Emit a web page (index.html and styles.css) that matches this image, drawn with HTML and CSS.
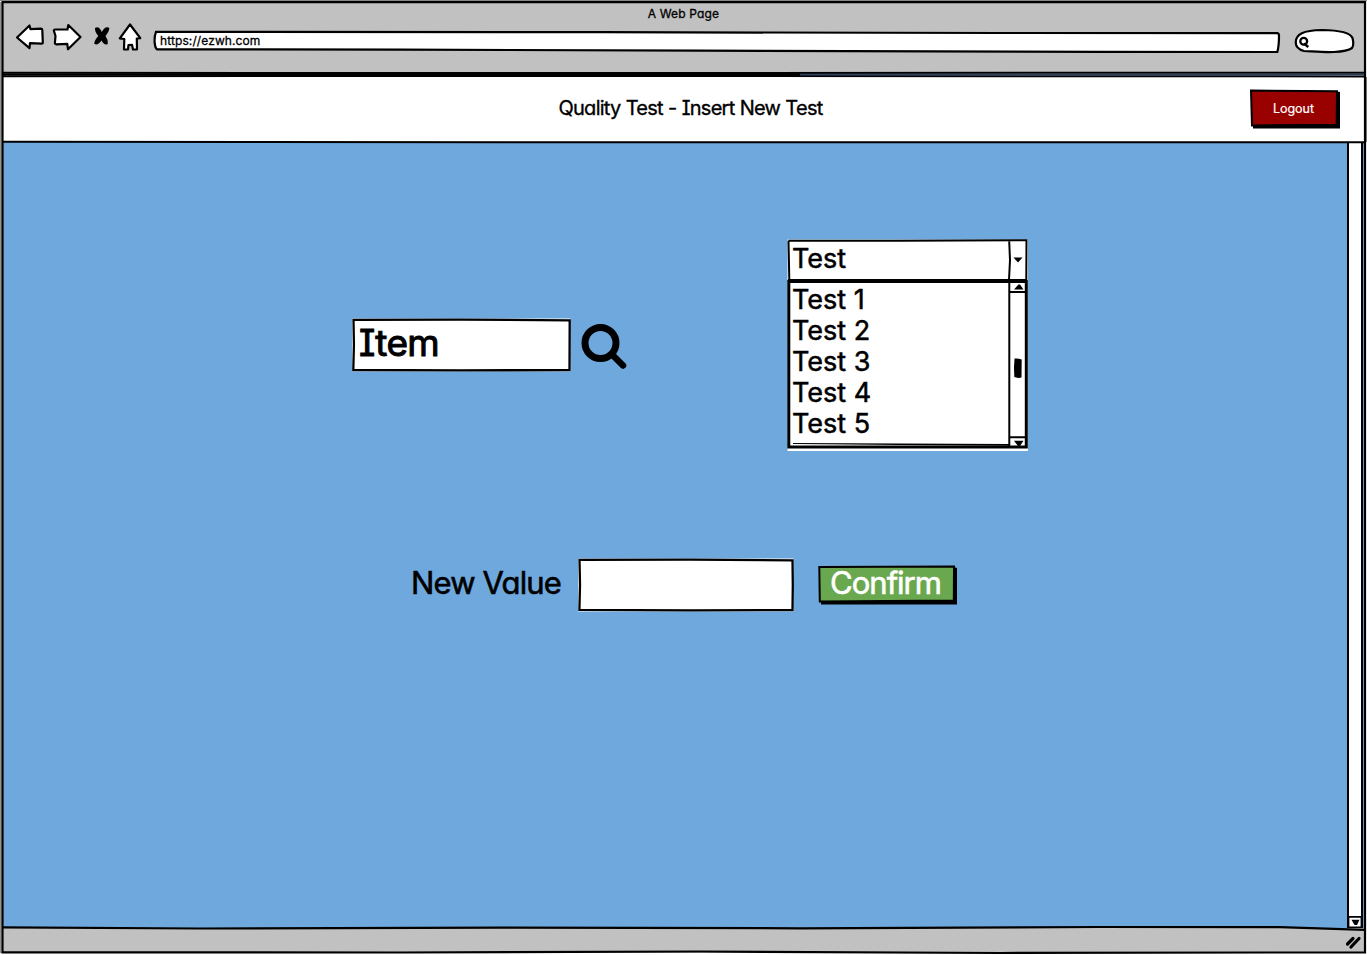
FILE: index.html
```html
<!DOCTYPE html>
<html lang="en">
<head>
<meta charset="utf-8">
<title>A Web Page</title>
<link rel="stylesheet" href="styles.css">
</head>
<body>
<div class="window">
  <header class="chrome">
    <div class="chrome-title"><span>A Web Page</span></div>
    <div class="toolbar">
      <svg class="nav-icons" width="128" height="32" viewBox="14 21 128 32">
        <g fill="#fff" stroke="#000" stroke-width="2.200" stroke-linejoin="round">
          <path d="M17 37.500L29.500 25.500L30.500 29.200L41 28.600Q42.300 28.700 42.300 30L42.800 42.500Q42.800 43.700 41.500 43.600L30 43.200L29.500 48.200Z"/>
          <path d="M53.800 30.500Q54 29.500 55 29.500L67.500 29.500L68.300 25L80.500 37L68 49.300L67.300 43.800L56 44.300Q54.800 44 54.900 43L55.500 36Z"/>
          <path d="M130 24.500L140.300 38.200L136.800 38.500L137 49.300L133 49.500L132 44.800L128.500 45L128 49.300L124 49.500L124.300 39L119.800 38.300Z"/>
        </g>
        <path d="M95 28Q99 25.500 101.800 32Q105 25.500 109.300 27.800Q109.500 31 105.500 36Q108.500 40 107.800 44Q104.500 46 101.500 40.500Q97 46.500 94.200 43.500Q94.500 40 98.300 36Q94.500 31.500 95 28Z" fill="#000"/>
      </svg>
      <div class="address">
        <svg class="frame" width="1128" height="24" viewBox="153 30 1128 24"><path d="M156 31.800L600 32.200L1000 33L1277.500 33.200Q1279 33.500 1279 36Q1279 46 1277.300 52L1100 51.800L700 50.700L400 49.600L157 49.300Q155.500 48.500 154.800 44Q154 37 156 31.800Z" fill="#fff" stroke="#000" stroke-width="2.200"/></svg>
        <span>https://ezwh.com</span>
      </div>
      <svg class="search-pill" width="62" height="28" viewBox="1293 27 62 28">
        <path d="M1295.800 42C1296 34 1303 30.500 1322 30C1337 30.200 1350 32 1352.500 38C1353.500 42 1353.500 46 1352 48C1348 51 1343 51.500 1334 52C1324 52.500 1312 51.300 1304 51C1297 49 1295.500 46 1295.800 42Z" fill="#fff" stroke="#000" stroke-width="2.200"/>
        <circle cx="1303.700" cy="41.300" r="3.400" fill="none" stroke="#000" stroke-width="2.300"/><path d="M1304 43.500L1308.300 47" stroke="#000" stroke-width="2.400"/>
      </svg>
    </div>
  </header>

  <section class="banner">
    <h1 class="page-title">Quality Test - Insert New Test</h1>
    <button class="btn logout">
      <svg class="frame" width="92" height="40" viewBox="1249 89 92 40"><path d="M1253 124L1337 124L1337 91.500L1340 92L1340 128.500L1253 128.500Z"/><path d="M1251 90.500L1337 91.300L1336.700 124.700L1252 125.500Z" fill="#900" stroke="#000" stroke-width="2"/></svg>
      <span>Logout</span>
    </button>
  </section>

  <main class="body">
    <div class="content">
      <div class="pick-row">
        <div class="item-search">
          <div class="field item">
            <svg class="frame" width="220" height="54" viewBox="351 318 220 54"><path d="M352 318.500H570.500V371.500H352Z" fill="#fff"/><path d="M353.500 319.900L460 319.600L569.700 320.300L569.500 370.200L460 370.300L353.300 370L353.900 345Z" fill="#fff" stroke="#000" stroke-width="2.300"/></svg>
            <span>Item</span>
          </div>
          <svg class="magnifier" width="48" height="48" viewBox="580 322 48 48"><circle cx="600.500" cy="343" r="15.500" fill="none" stroke="#000" stroke-width="7"/><path d="M612 354.500L623 365.500" stroke="#000" stroke-width="6.500" stroke-linecap="round"/></svg>
        </div>

        <div class="dropdown">
          <svg class="frame" width="242" height="212" viewBox="787 239 242 212">
            <path d="M787.500 239.500H1028V451H787.500Z" fill="#fff"/>
            <path d="M788.500 240.800L900 240.700L1026.500 240.300L1026.300 280M788.500 240.800L789.300 280M1009.200 241L1010 260L1009 280" fill="none" stroke="#000" stroke-width="2"/>
            <path d="M788.800 281.500H1026.300V447H788.800Z" fill="none" stroke="#000" stroke-width="3"/>
            <path d="M788 281H1027" stroke="#000" stroke-width="4"/>
            <path d="M1009.300 282V446M1010 292H1026M1010 437.300H1026" fill="none" stroke="#000" stroke-width="2"/>
            <path d="M793 443L1009 444V445.800L900 445L793 444Z"/>
            <path d="M1013.500 257.500H1022.500L1018 262.500ZM1014 289.500L1018.500 284.500H1020L1023.500 289.500ZM1014 440.800H1023.500L1020 446H1018Z"/>
            <path d="M1014.500 358.500Q1018 358 1021.700 359.500L1021.500 377.500Q1018 378.500 1014.300 377L1014 367Z"/>
          </svg>
          <div class="selected"><span>Test</span></div>
          <ul class="options">
            <li><span>Test 1</span></li><li><span>Test 2</span></li><li><span>Test 3</span></li><li><span>Test 4</span></li><li><span>Test 5</span></li>
          </ul>
        </div>
      </div>

      <div class="value-row">
        <label class="value-label">New Value</label>
        <div class="field value">
          <svg class="frame" width="216" height="54" viewBox="578 558 216 54"><path d="M578 558.500H793.500V611.500H578Z" fill="#fff"/><path d="M579.500 559.900L690 559.600L792.500 560.300L792.800 585L792.500 610L690 610.300L579.400 609.900L580 585Z" fill="#fff" stroke="#000" stroke-width="2.300"/></svg>
        </div>
        <button class="btn confirm">
          <svg class="frame" width="140" height="40" viewBox="818 565 140 40"><path d="M821 600H954V567L957 568V604.500H821Z"/><path d="M819.300 567L954 566.500L953.800 600.500L819.800 601.500Z" fill="#6aa84f" stroke="#000" stroke-width="2"/></svg>
          <span>Confirm</span>
        </button>
      </div>
    </div>
    <div class="scrollbar">
      <svg width="19" height="787" viewBox="1347 143 19 787"><path d="M1348 143H1362V928H1348Z" fill="#fff"/><path d="M1348 143V928M1362 143V928" stroke="#000" stroke-width="2"/><path d="M1348.500 916.800H1361.500V927.300H1348.500Z" fill="#fff" stroke="#000" stroke-width="1.800"/><path d="M1351.500 919.800H1359.500L1357 925H1354.500Z"/></svg>
    </div>
  </main>

  <footer class="statusbar">
    <svg class="grip" width="20" height="16" viewBox="1344 934 20 16"><path d="M1347.500 944L1353 938.500M1351 947L1359 938.500" stroke="#000" stroke-width="3.200" stroke-linecap="round"/></svg>
  </footer>

  <svg class="outline" width="1367" height="955" viewBox="0 0 1367 955" fill="none" stroke="#000">
    <path d="M0 .5H1367" stroke="#858985" stroke-width="1"/>
    <path d="M.8 2V953" stroke="#8d918d" stroke-width="1.500"/>
    <path d="M2.500 2.200H1365V952.300L1000 953L700 951.500L400 952.500L2.500 952.300Z" stroke-width="2.200"/>
    <path d="M2 72.800L300 73L1365 72.800M2 76.200L500 76L1365 76.400" stroke-width="2"/>
    <path d="M3 74.500H800" stroke-width="2"/><path d="M800 74.600H1364" stroke="#29425b" stroke-width="1.600"/>
    <path d="M2 141.700L700 142.300L1365 142.200M1365.500 77V142" stroke-width="2"/>
    <path d="M2 927.300L200 928.500L500 927.600L800 928.300L1100 927L1280 927.200L1365 929.800" stroke-width="2.200"/>
  </svg>
</div>
</body>
</html>
```
FILE: styles.css
```css
* { box-sizing: border-box; }
body {
  margin: 0;
  background: #fff;
  color: #000;
  font-family: Inter, "Noto Sans", sans-serif;
  font-feature-settings: "cv11", "cv08";
}
.window {
  position: relative;
  display: grid;
  grid-template-rows: 75px 67px 786px 25px;
  width: 1367px;
  height: 955px;
  overflow: hidden;
}
.outline { position: absolute; inset: 0; pointer-events: none; }
.frame { position: absolute; top: 0; left: 0; }
.frame ~ * { position: relative; }

.chrome { margin: 0 2px; background: #c1c1c1; }
.chrome-title {
  height: 25px;
  padding-top: 4px;
  text-align: center;
  font-size: 12px;
  line-height: 20px;
  letter-spacing: 0.15px;
  -webkit-text-stroke: 0.3px #000;
}
.toolbar { display: flex; height: 32px; padding-left: 12px; margin-top: -4px; }
.nav-icons { flex: none; }
.address {
  position: relative;
  width: 1128px;
  height: 24px;
  margin: 9px 12px 0 11px;
  padding-left: 7px;
  font-size: 12px;
  line-height: 21px;
  letter-spacing: 0.1px;
  -webkit-text-stroke: 0.3px #000;
}
.search-pill { flex: none; margin-top: 6px; }

.banner {
  display: grid;
  grid-template-columns: 1fr auto;
  margin: 0 2px;
  padding: 14px 24px 0 0;
  background: #fff;
}
.page-title {
  margin: 0;
  padding-left: 130px;
  text-align: center;
  font-size: 20px;
  font-weight: 400;
  line-height: 38px;
  letter-spacing: -0.72px;
  word-spacing: 0.2px;
  -webkit-text-stroke: 0.35px #000;
}
.btn {
  position: relative;
  border: 0;
  padding: 0;
  background: none;
  color: #fff;
  font-family: inherit;
  font-feature-settings: inherit;
}
.logout { width: 92px; height: 40px; padding: 0 3px 1px 0; font-size: 12.5px; -webkit-text-stroke: 0.2px #fff; }

.body { display: flex; justify-content: space-between; margin: 0 2px; background: #6fa8dc; }
.content { width: 1345px; padding: 97px 0 0 349px; }
.scrollbar { width: 18px; padding-top: 1px; }
.scrollbar svg { display: block; }

.pick-row { display: flex; gap: 159px; height: 212px; }
.item-search { display: flex; gap: 9px; padding-top: 79px; }
.field { position: relative; height: 54px; }
.item {
  width: 220px;
  padding-left: 8px;
  font-size: 37px;
  line-height: 49px;
  letter-spacing: -0.6px;
  -webkit-text-stroke: 1px #000;
}
.magnifier { margin-top: 4px; }
.dropdown {
  position: relative;
  width: 242px;
  font-size: 27px;
  -webkit-text-stroke: 0.5px #000;
}
.selected { height: 45px; padding-left: 5px; line-height: 40px; }
.options { margin: 0; padding: 0 0 0 5px; list-style: none; line-height: 31px; }

.value-row { display: flex; margin-top: 107px; padding-left: 60px; }
.value-label {
  width: 167px;
  font-size: 31px;
  line-height: 50px;
  letter-spacing: -0.85px;
  -webkit-text-stroke: 0.6px #000;
}
.value { width: 216px; }
.confirm {
  width: 140px;
  height: 40px;
  margin: 7px 0 0 24px;
  padding: 0 5px 4px 0;
  font-size: 31px;
  line-height: 36px;
  letter-spacing: -1px;
  -webkit-text-stroke: 0.6px #fff;
}

.statusbar { display: flex; justify-content: flex-end; margin: 0 2px; padding: 6px 1px 0 0; background: #c1c1c1; }
.grip { display: block; }
```
